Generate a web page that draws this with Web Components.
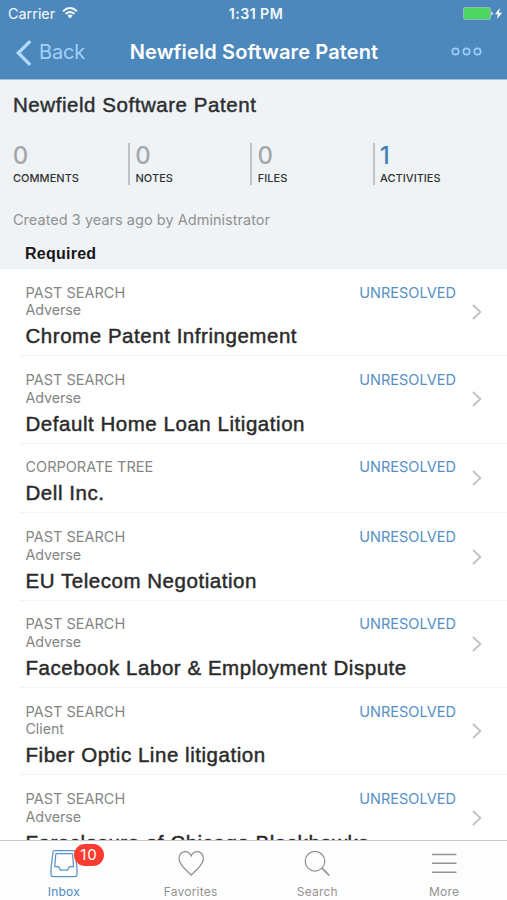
<!DOCTYPE html>
<html lang="en">
<head>
<meta charset="utf-8">
<title>Newfield Software Patent</title>
<style>
  html, body { margin: 0; height: 100%; }
  body { font-family: Inter, sans-serif; background: #fff; overflow: hidden; }
</style>
</head>
<body>
<app-screen>
  <status-bar slot="top"></status-bar>
  <nav-bar slot="top" back="Back">Newfield Software Patent</nav-bar>
  <record-summary heading="Newfield Software Patent" byline="Created 3 years ago by Administrator">
    <stat-cell value="0" label="COMMENTS"></stat-cell>
    <stat-cell value="0" label="NOTES" divided></stat-cell>
    <stat-cell value="0" label="FILES" divided></stat-cell>
    <stat-cell value="1" label="ACTIVITIES" divided active></stat-cell>
  </record-summary>
  <section-head>Required</section-head>
  <activity-row kind="PAST SEARCH" role-name="Adverse" status="UNRESOLVED">Chrome Patent Infringement</activity-row>
  <activity-row kind="PAST SEARCH" role-name="Adverse" status="UNRESOLVED">Default Home Loan Litigation</activity-row>
  <activity-row kind="CORPORATE TREE" status="UNRESOLVED">Dell Inc.</activity-row>
  <activity-row kind="PAST SEARCH" role-name="Adverse" status="UNRESOLVED">EU Telecom Negotiation</activity-row>
  <activity-row kind="PAST SEARCH" role-name="Adverse" status="UNRESOLVED">Facebook Labor &amp; Employment Dispute</activity-row>
  <activity-row kind="PAST SEARCH" role-name="Client" status="UNRESOLVED">Fiber Optic Line litigation</activity-row>
  <activity-row kind="PAST SEARCH" role-name="Adverse" status="UNRESOLVED">Foreclosure of Chicago Blackhawks</activity-row>
  <tab-bar slot="bottom">
    <tab-item icon="inbox" badge="10" active>Inbox</tab-item>
    <tab-item icon="heart">Favorites</tab-item>
    <tab-item icon="search">Search</tab-item>
    <tab-item icon="menu">More</tab-item>
  </tab-bar>
</app-screen>
<script>
class Base extends HTMLElement {
  connectedCallback() {
    if (!this.shadowRoot) this.attachShadow({ mode: 'open' }).innerHTML = this.render();
  }
  at(name) { return this.getAttribute(name) || ''; }
}

customElements.define('app-screen', class extends Base {
  render() { return `<style>
    :host { display: flex; flex-direction: column; height: 100vh; }
    .top { flex: none; background: #4c88bb; border-bottom: 1px solid #9fbfdb; height: 80px; box-sizing: border-box; }
    main { flex: 1; min-height: 0; overflow: hidden; }
    </style><div class="top"><slot name="top"></slot></div><main><slot></slot></main><slot name="bottom"></slot>`; }
});

customElements.define('status-bar', class extends Base {
  render() { return `<style>
    :host { display: grid; grid-template-columns: 1fr auto 1fr; align-items: center; height: 28px; padding: 0 5px 0 8px; color: #f4f9fd; box-sizing: border-box; }
    .l { display: flex; align-items: center; gap: 7px; font-size: 14.4px; line-height: 28px; }
    .t { font-size: 14.2px; font-weight: 600; letter-spacing: .45px; padding-left: 2px; line-height: 26px; margin-top: -1px; }
    .r { display: flex; justify-content: flex-end; align-items: center; gap: 3px; margin-top: -1px; }
    svg { display: block; margin-top: -2px; }
    .r svg { margin-top: 0; }
    </style>
    <div class="l">Carrier<svg width="16" height="12" viewBox="0 0 16 12" fill="none" stroke="#f4f9fd" stroke-width="1.9"><path d="M1 4.2Q8-2 15 4.2M3.5 6.9Q8 3 12.5 6.9"/><path d="M5.3 8.6Q8 6.5 10.7 8.6L8 11.5Z" fill="#f4f9fd" stroke="none"/></svg></div>
    <div class="t">1:31 PM</div>
    <div class="r"><svg width="30" height="13" viewBox="0 0 30 13" style="margin-right:-1px"><rect x=".5" y=".5" width="27" height="12" rx="1.5" fill="#4cd763" stroke="#8fb9b5"/><path d="M28.3 4.5Q30 5 30 6.5T28.3 8.500Z" fill="#dcebf5"/></svg>
    <svg width="7" height="11" viewBox="0 0 7 11"><path d="M4.8 0L0 6.2H2.9L2.1 11L7 4.700H4Z" fill="#fff"/></svg></div>`; }
});

customElements.define('nav-bar', class extends Base {
  render() { return `<style>
    :host { display: grid; grid-template-columns: 1fr auto 1fr; align-items: center; height: 49px; padding: 0 25px 0 16px; box-sizing: border-box; }
    .b { display: flex; align-items: center; gap: 7px; color: #a3d0fb; font-size: 20px; letter-spacing: -.2px; line-height: 49px; }
    h1 { margin: 0; padding-left: 10px; font-size: 20px; font-weight: 600; letter-spacing: .12px; color: #fff; white-space: nowrap; line-height: 49px; }
    .m { justify-self: end; padding-bottom: 3px; }
    svg { display: block; }
    </style>
    <div class="b"><svg width="16" height="26" viewBox="0 0 16 26" fill="none" stroke="#b4dafd" stroke-width="3.3"><path d="M14.2 1.2L2.3 13L14.2 24.8"/></svg><span>${this.at('back')}</span></div>
    <h1><slot></slot></h1>
    <div class="m"><svg width="31" height="9" viewBox="0 0 31 9" fill="none" stroke="#9bcbf8" stroke-width="1.7"><circle cx="4.5" cy="4.5" r="3.2"/><circle cx="15.5" cy="4.5" r="3.2"/><circle cx="26.5" cy="4.5" r="3.2"/></svg></div>`; }
});

customElements.define('record-summary', class extends Base {
  render() { return `<style>
    :host { display: block; background: #eff3f6; padding: 12px 5px 9px 13px; }
    h2 { margin: 0; font: 400 20.5px/25px "Liberation Sans", sans-serif; letter-spacing: .55px; color: #2d2f31; -webkit-text-stroke: .45px #2d2f31; }
    .s { display: grid; grid-template-columns: 115px 122.3px 122.3px auto; margin-top: 26px; height: 41px; }
    p { margin: 27px 0 0; font-size: 14.5px; line-height: 18px; letter-spacing: .03px; color: #8f9193; }
    </style><h2>${this.at('heading')}</h2><div class="s"><slot></slot></div><p>${this.at('byline')}</p>`; }
});

customElements.define('stat-cell', class extends Base {
  render() { return `<style>
    :host { display: block; box-sizing: border-box; color: #a5a7a8; }
    :host([divided]) { border-left: 2px solid #c0c3c5; padding-left: 5.5px; }
    :host([active]) { color: #4380b6; }
    b { display: block; font-size: 24px; font-weight: 500; line-height: 26px; margin-left: -.3px; }
    span { display: block; font-size: 11px; font-weight: 500; line-height: 14px; letter-spacing: .02px; color: #2f3133; margin-top: 2px; }
    </style><b>${this.at('value')}</b><span>${this.at('label')}</span>`; }
});

customElements.define('section-head', class extends Base {
  render() { return `<style>
    :host { display: block; background: #eff3f6; padding: 1px 25px 0; height: 31px; box-sizing: border-box; font: 700 16px/30px "Liberation Sans", sans-serif; letter-spacing: .25px; color: #161616; }
    </style><slot></slot>`; }
});

customElements.define('activity-row', class extends Base {
  render() {
    const role = this.at('role-name');
    return `<style>
    :host { display: flex; align-items: center; margin-left: 20px; padding: 0 25px 0 5.5px; height: ${role ? 87.3 : 69.8}px; box-sizing: border-box; border-bottom: 1px solid #f3f4f4; }
    .c { flex: 1; align-self: flex-start; padding-top: 14.8px; }
    .m { display: flex; justify-content: space-between; font-size: 14.5px; line-height: 17.5px; color: #858585; }
    .u { color: #5490c6; letter-spacing: .03px; }
    .r { font-size: 14.3px; line-height: 17.5px; letter-spacing: -.08px; color: #858585; }
    .t { margin-top: 4.5px; font: 400 20.5px/25px "Liberation Sans", sans-serif; letter-spacing: .54px; color: #2a2a2a; -webkit-text-stroke: .45px #2a2a2a; white-space: nowrap; }
    svg { display: block; margin-left: 16px; }
    </style>
    <div class="c"><div class="m"><span>${this.at('kind')}</span><span class="u">${this.at('status')}</span></div>
    ${role ? `<div class="r">${role}</div>` : ''}<div class="t"><slot></slot></div></div>
    <svg width="10" height="16" viewBox="0 0 10 16" fill="none" stroke="#c4c4c6" stroke-width="2"><path d="M1 1L8.3 8L1 15"/></svg>`; }
});

customElements.define('tab-bar', class extends Base {
  render() { return `<style>
    :host { flex: none; display: grid; grid-template-columns: repeat(4, 1fr); height: 60px; box-sizing: border-box; border-top: 1px solid #c9c9ca; background: #fdfdfd; }
    </style><slot></slot>`; }
});

const ICONS = {
  inbox: '<path d="M4.5 1.5H23.5Q25 1.5 25.2 3L27 19.5V25.5Q27 27.5 25 27.5H3Q1 27.5 1 25.5V19.5L3 3Q3.2 1.5 4.5 1.5Z"/><path d="M6.5 4.5H21.8Q22.5 4.5 22.6 5.3L23.5 17.5H19.5L17.5 21H10.5L8.5 17.5H4.7L5.8 5.3Q5.9 4.5 6.5 4.5Z"/>',
  heart: '<path d="M14.2 26C11 22.5 2 16.5 2 9.5C2 5.5 4.7 2.5 8.2 2.5C11 2.5 13.2 4.2 14.2 6.8C15.2 4.2 17.4 2.5 20.2 2.5C23.7 2.5 26.4 5.5 26.4 9.5C26.4 16.5 17.4 22.5 14.2 26Z"/>',
  search: '<circle cx="12" cy="12.2" r="9.8"/><path d="M19 19.2L26.3 26.5" stroke-width="1.7"/>',
  menu: '<path d="M2 5.5H26.5M2 14.3H26.5M2 23.3H26.5" stroke-width="1.6"/>'
};
customElements.define('tab-item', class extends Base {
  render() { return `<style>
    :host { display: flex; flex-direction: column; align-items: center; padding: 8px 0 0 1px; color: #929292; --ink: #929292; }
    :host([active]) { color: #4a8ac6; --ink: #5b92c5; }
    .i { position: relative; height: 29px; }
    svg { display: block; fill: none; stroke: var(--ink); stroke-width: 1.25; }
    .b { position: absolute; left: 24px; top: -5px; width: 30px; height: 22px; border-radius: 11px; background: #fe3b30; color: #fff; font-size: 15px; line-height: 22px; letter-spacing: .8px; text-align: center; }
    .l { font-size: 12px; line-height: 16px; letter-spacing: .22px; margin-top: 6px; }
    </style>
    <div class="i"><svg width="28" height="29" viewBox="0 0 28 29">${ICONS[this.at('icon')]}</svg>${this.at('badge') ? `<div class="b">${this.at('badge')}</div>` : ''}</div>
    <div class="l"><slot></slot></div>`; }
});
</script>
</body>
</html>
